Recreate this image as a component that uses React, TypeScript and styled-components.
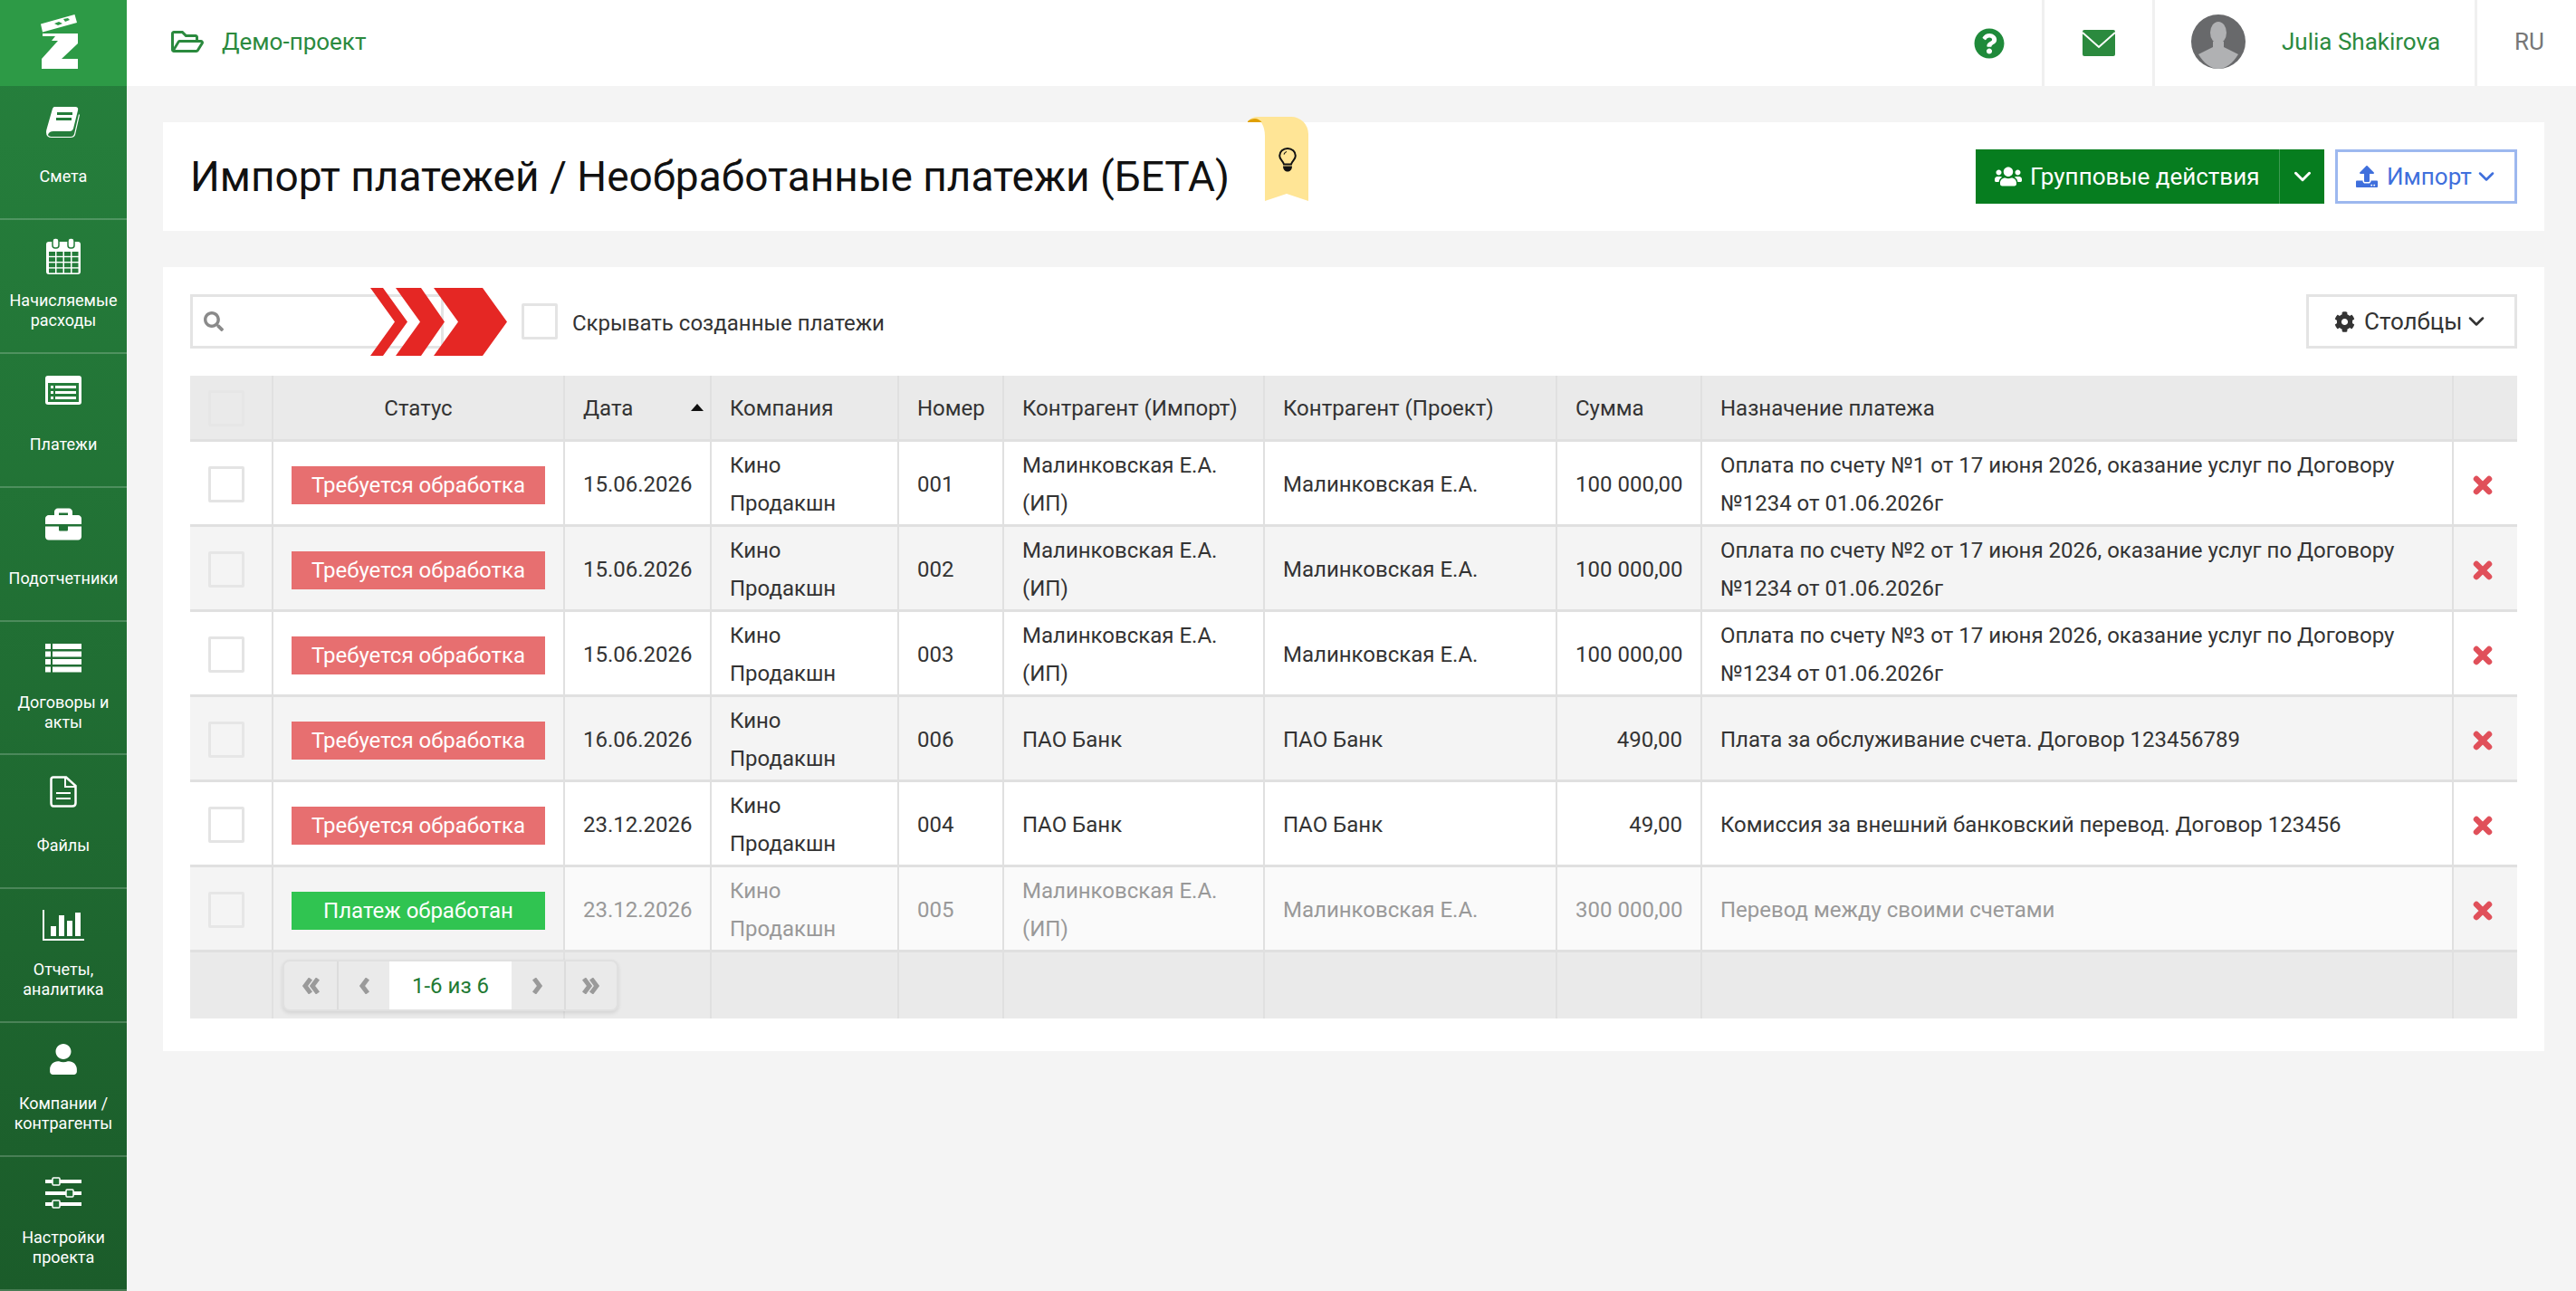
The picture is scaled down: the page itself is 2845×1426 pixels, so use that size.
import styled, { createGlobalStyle } from "styled-components";
import {
  FaBriefcase,
  FaCog,
  FaQuestionCircle,
  FaRegFolderOpen,
  FaSearch,
  FaUpload,
  FaUser,
  FaUsers,
} from "react-icons/fa";
import { ChevronDown } from "lucide-react";

const BookIcon = () => (
  <svg width="38" height="36" viewBox="0 0 38 36">
    <path d="M9 1H32Q36 1 35 5L30 25Q29 28 26 28H8Q3 28 2 32Q3 34 7 34H27Q30 34 31 31L36 9L37 10L32 32Q31 35 27 35H6Q0 35 0 29Q0 27 1 24L7 3Q8 1 9 1Z" fill="#fff" />
    <rect x="12" y="7" width="17" height="3" fill="#247c3a" />
    <rect x="11" y="13" width="17" height="3" fill="#247c3a" />
  </svg>
);

const CalendarIcon = () => {
  const cells = [];
  for (let r = 0; r < 4; r++) {
    for (let c = 0; c < 4; c++) {
      cells.push(<rect key={`${r}-${c}`} x={3 + c * 8.500} y={15 + r * 6.200} width="7" height="4.800" fill="#247c3a" />);
    }
  }
  return (
    <svg width="38" height="40" viewBox="0 0 38 40">
      <rect x="0" y="4" width="38" height="36" rx="3" fill="#fff" />
      {cells}
      <rect x="7" y="0" width="7" height="11" rx="3" fill="#fff" stroke="#247c3a" strokeWidth="1.500" />
      <rect x="24" y="0" width="7" height="11" rx="3" fill="#fff" stroke="#247c3a" strokeWidth="1.500" />
    </svg>
  );
};

const ListAltIcon = () => (
  <svg width="40" height="32" viewBox="0 0 40 32">
    <rect width="40" height="32" rx="3" fill="#fff" />
    <rect x="3" y="8" width="34" height="21" fill="#247c3a" />
    {[11, 17, 23].map((y) => (
      <g key={y} fill="#fff">
        <rect x="6" y={y} width="3" height="3" />
        <rect x="11" y={y} width="23" height="3" />
      </g>
    ))}
  </svg>
);

const ThListIcon = () => (
  <svg width="40" height="32" viewBox="0 0 40 32" fill="#fff">
    {[0, 8.500, 17, 25.500].map((y) => (
      <g key={y}>
        <rect x="0" y={y} width="6" height="6" />
        <rect x="8" y={y} width="32" height="6" />
      </g>
    ))}
  </svg>
);

const FileIcon = () => (
  <svg width="30" height="35" viewBox="0 0 30 35" fill="none" stroke="#fff" strokeWidth="2.500">
    <path d="M4 1.500H18L28.500 11V30Q28.500 33.500 25 33.500H4Q1.500 33.500 1.500 30V4Q1.500 1.500 4 1.500Z" />
    <path d="M17 2V12H28" strokeWidth="2" />
    <path d="M7 19H23M7 25H23" strokeWidth="2" />
  </svg>
);

const BarChartIcon = () => (
  <svg width="46" height="34" viewBox="0 0 46 34" fill="#fff">
    <rect x="0" y="0" width="2" height="34" />
    <rect x="0" y="32" width="46" height="2" />
    <rect x="9" y="18" width="6" height="11" />
    <rect x="18" y="6" width="6" height="23" />
    <rect x="27" y="12" width="6" height="17" />
    <rect x="36" y="3" width="6" height="26" />
  </svg>
);

const SlidersIcon = () => (
  <svg width="40" height="36" viewBox="0 0 40 36">
    {[
      [5, 8],
      [18, 23],
      [30, 8],
    ].map(([y, x]) => (
      <g key={y}>
        <rect x="0" y={y - 2} width="40" height="4" fill="#fff" />
        <rect x={x} y={y - 4} width="8" height="8" rx="1" fill="#1f6e34" stroke="#fff" strokeWidth="1.500" />
      </g>
    ))}
  </svg>
);

const MailIcon = () => (
  <svg width="36" height="29" viewBox="0 0 36 29">
    <rect width="36" height="29" rx="2" fill="#2b8a3e" />
    <path d="M0 3L18 19L36 3" fill="none" stroke="#fff" strokeWidth="2" />
  </svg>
);

const RibbonShape = () => (
  <svg width="68" height="94" viewBox="0 0 68 94">
    <path d="M0 5C5 0 8 0 12 0H48A19 19 0 0 1 67 19V93L43 85L19 93V21C19 10 14 2 8 2C5 2 2 3 0 5Z" fill="#ffe596" />
    <path d="M0 5C2 3 5 2 8 2C11 2 14 4 15.500 6H0Z" fill="#e0a000" />
    <g transform="translate(34 34.500)" fill="none" stroke="#111">
      <path d="M6 18C5 14 1.200 13 1.200 8.500A8.800 8 0 0 1 18.800 8.500C18.800 13 15 14 14 18Z" strokeWidth="2" />
      <path d="M6 7Q7 4.500 9 4" strokeWidth="1.200" />
      <path d="M5 20H15C15 24 12.500 26 10 26C7.500 26 5 24 5 20Z" fill="#111" stroke="none" />
    </g>
  </svg>
);

const Logo = () => (
  <svg width="44" height="60" viewBox="0 0 44 60">
    <path d="M0 10.500L37.500 0L40 9L2 19.500Z" fill="#fff" />
    <path d="M15 10L20 8L24 10L19 12Z M25 5L30 4L32 6L27 8Z" fill="#2d9a46" />
    <path d="M2 21H41V32L23 49H41V60H1V49L19 29H12L16 24H2Z" fill="#fff" />
  </svg>
);

const Avatar = () => (
  <svg width="60" height="60" viewBox="0 0 60 60">
    <circle cx="30" cy="30" r="30" fill="#68696b" />
    <ellipse cx="30" cy="20" rx="9" ry="12" fill="#b0b1b3" />
    <path d="M24 30V36L8 44C14 54 22 60 30 60C38 60 46 54 52 44L36 36V30Z" fill="#b0b1b3" />
  </svg>
);

const Chevrons = () => (
  <svg width="152" height="75" viewBox="0 0 152 75" fill="#e52724">
    <polygon points="0,0 14,0 41,37.500 14,75 0,75 27,37.500" />
    <polygon points="28,0 56,0 82,37.500 56,75 28,75 55,37.500" />
    <polygon points="70,0 124,0 151,37.500 124,75 70,75 97,37.500" />
  </svg>
);

const DeleteIcon = () => (
  <svg width="22" height="22" viewBox="0 0 22 22">
    <path d="M4 4L18 18M18 4L4 18" stroke="#e0505a" strokeWidth="6.500" strokeLinecap="round" />
  </svg>
);

// one or two thick angle marks, mirrored for the forward buttons
const PagerAngle = ({ double, forward }: { double?: boolean; forward?: boolean }) => (
  <svg width="20" height="18" viewBox="0 0 20 18" fill="none" stroke="#9a9a9a" strokeWidth="5">
    <g transform={forward ? "translate(20 0) scale(-1 1)" : undefined}>
      {double ? (
        <>
          <path d="M10 1L4 9L10 17" />
          <path d="M18 1L12 9L18 17" />
        </>
      ) : (
        <path d="M14 1L8 9L14 17" />
      )}
    </g>
  </svg>
);

const navItems = [
  { icon: <BookIcon />, label: "Смета" },
  { icon: <CalendarIcon />, label: "Начисляемые расходы" },
  { icon: <ListAltIcon />, label: "Платежи" },
  { icon: <FaBriefcase size={40} />, label: "Подотчетники" },
  { icon: <ThListIcon />, label: "Договоры и акты" },
  { icon: <FileIcon />, label: "Файлы" },
  { icon: <BarChartIcon />, label: "Отчеты, аналитика" },
  { icon: <FaUser size={34} />, label: "Компании / контрагенты" },
  { icon: <SlidersIcon />, label: "Настройки проекта" },
];

const columns = [90, 322, 162, 207, 116, 288, 323, 160, 830, 72];

const purposeTail = " от 17 июня 2026, оказание услуг по Договору №1234 от 01.06.2026г";

const rows = [
  { date: "15.06.2026", num: "001", importName: "Малинковская Е.А. (ИП)", project: "Малинковская Е.А.", sum: "100 000,00", purpose: "Оплата по счету №1" + purposeTail },
  { date: "15.06.2026", num: "002", importName: "Малинковская Е.А. (ИП)", project: "Малинковская Е.А.", sum: "100 000,00", purpose: "Оплата по счету №2" + purposeTail },
  { date: "15.06.2026", num: "003", importName: "Малинковская Е.А. (ИП)", project: "Малинковская Е.А.", sum: "100 000,00", purpose: "Оплата по счету №3" + purposeTail },
  { date: "16.06.2026", num: "006", importName: "ПАО Банк", project: "ПАО Банк", sum: "490,00", purpose: "Плата за обслуживание счета. Договор 123456789" },
  { date: "23.12.2026", num: "004", importName: "ПАО Банк", project: "ПАО Банк", sum: "49,00", purpose: "Комиссия за внешний банковский перевод. Договор 123456" },
  { date: "23.12.2026", num: "005", importName: "Малинковская Е.А. (ИП)", project: "Малинковская Е.А.", sum: "300 000,00", purpose: "Перевод между своими счетами", done: true },
];

export default function App() {
  return (
    <Page>
      <GlobalStyle />
      <Sidebar>
        <LogoBox>
          <Logo />
        </LogoBox>
        <Nav>
          {navItems.map((item) => (
            <NavItem key={item.label}>
              <NavIcon>{item.icon}</NavIcon>
              <NavLabel>{item.label}</NavLabel>
            </NavItem>
          ))}
        </Nav>
      </Sidebar>

      <Main>
        <Header>
          <Project>
            <FaRegFolderOpen size={36} />
            <span>Демо-проект</span>
          </Project>
          <HeaderCell $width={120}>
            <FaQuestionCircle size={34} color="#1f8a3a" />
          </HeaderCell>
          <HeaderCell $width={122}>
            <MailIcon />
          </HeaderCell>
          <UserCell>
            <Avatar />
            <UserName>Julia Shakirova</UserName>
          </UserCell>
          <LangCell>RU</LangCell>
        </Header>

        <Content>
          <TitleCard>
            <Title>Импорт платежей / Необработанные платежи (БЕТА)</Title>
            <Ribbon>
              <RibbonShape />
            </Ribbon>
            <Actions>
              <GroupButton>
                <GroupMain>
                  <FaUsers size={30} />
                  Групповые действия
                </GroupMain>
                <GroupCaret>
                  <ChevronDown size={30} strokeWidth={2.400} />
                </GroupCaret>
              </GroupButton>
              <ImportButton>
                <FaUpload size={24} />
                Импорт
                <ChevronDown size={28} strokeWidth={2.200} />
              </ImportButton>
            </Actions>
          </TitleCard>

          <TableCard>
            <Toolbar>
              <SearchWrap>
                <SearchBox>
                  <FaSearch size={22} color="#8a8a8a" />
                </SearchBox>
                <ChevronsOver>
                  <Chevrons />
                </ChevronsOver>
              </SearchWrap>
              <Checkbox />
              <HideLabel>Скрывать созданные платежи</HideLabel>
              <ColumnsButton>
                <FaCog size={23} />
                Столбцы
                <ChevronDown size={28} strokeWidth={2.200} />
              </ColumnsButton>
            </Toolbar>

            <Table>
              <colgroup>
                {columns.map((w, i) => (
                  <Col key={i} $w={w} />
                ))}
              </colgroup>
              <thead>
                <tr>
                  <Th>
                    <Checkbox $muted />
                  </Th>
                  <Th $center>Статус</Th>
                  <Th>
                    <SortBox>
                      Дата
                      <SortArrow />
                    </SortBox>
                  </Th>
                  <Th>Компания</Th>
                  <Th>Номер</Th>
                  <Th>Контрагент (Импорт)</Th>
                  <Th>Контрагент (Проект)</Th>
                  <Th>Сумма</Th>
                  <Th>Назначение платежа</Th>
                  <Th />
                </tr>
              </thead>
              <tbody>
                {rows.map((row, i) => (
                  <Row key={row.num} $odd={i % 2 === 1}>
                    <Td>
                      <Checkbox $muted={i % 2 === 1} />
                    </Td>
                    <Td>
                      <Status $done={row.done}>{row.done ? "Платеж обработан" : "Требуется обработка"}</Status>
                    </Td>
                    <Td $dim={row.done}>{row.date}</Td>
                    <Td $dim={row.done}>Кино Продакшн</Td>
                    <Td $dim={row.done}>{row.num}</Td>
                    <Td $dim={row.done}>{row.importName}</Td>
                    <Td $dim={row.done}>{row.project}</Td>
                    <Td $dim={row.done} $right>
                      {row.sum}
                    </Td>
                    <Td $dim={row.done}>{row.purpose}</Td>
                    <DeleteCell>
                      <DeleteIcon />
                    </DeleteCell>
                  </Row>
                ))}
              </tbody>
              <tfoot>
                <tr>
                  <Foot />
                  <Foot>
                    <Pager>
                      <PagerButton>
                        <PagerAngle double />
                      </PagerButton>
                      <PagerButton>
                        <PagerAngle />
                      </PagerButton>
                      <PagerInfo>1-6 из 6</PagerInfo>
                      <PagerButton>
                        <PagerAngle forward />
                      </PagerButton>
                      <PagerButton>
                        <PagerAngle double forward />
                      </PagerButton>
                    </Pager>
                  </Foot>
                  <Foot />
                  <Foot />
                  <Foot />
                  <Foot />
                  <Foot />
                  <Foot />
                  <Foot />
                  <Foot />
                </tr>
              </tfoot>
            </Table>
          </TableCard>
        </Content>
      </Main>
    </Page>
  );
}

const GlobalStyle = createGlobalStyle`
  * {
    box-sizing: border-box;
  }
  html, body {
    margin: 0;
    padding: 0;
  }
  body {
    font-family: Roboto, "Noto Sans", sans-serif;
    font-size: 24px;
    color: #333;
    background: #f4f4f4;
  }
`;

const Page = styled.div`
  display: flex;
  width: 2845px;
  height: 1426px;
  overflow: hidden;
`;

const Sidebar = styled.aside`
  flex: none;
  display: flex;
  flex-direction: column;
  width: 140px;
  background: linear-gradient(#26813d, #1b5c2a);
`;

const LogoBox = styled.div`
  display: flex;
  flex: none;
  justify-content: center;
  align-items: center;
  height: 95px;
  padding: 0 6px 4px 0;
  background: #2d9a46;
`;

const Nav = styled.nav`
  display: flex;
  flex: 1;
  flex-direction: column;
`;

const NavItem = styled.div`
  display: flex;
  flex: 1;
  flex-direction: column;
  align-items: center;
  padding-top: 20px;
  color: #fff;
  border-bottom: 2px solid rgba(255, 255, 255, 0.2);
`;

const NavIcon = styled.div`
  display: flex;
  justify-content: center;
  align-items: center;
  height: 40px;
`;

const NavLabel = styled.div`
  display: flex;
  align-items: center;
  height: 46px;
  margin-top: 17px;
  padding: 0 6px;
  font-size: 18px;
  line-height: 22px;
  text-align: center;
`;

const Main = styled.div`
  flex: 1;
  min-width: 0;
`;

const Header = styled.header`
  display: flex;
  align-items: stretch;
  height: 95px;
  background: #fff;
`;

const Project = styled.div`
  display: flex;
  flex: 1;
  align-items: center;
  gap: 20px;
  padding: 0 0 4px 49px;
  color: #2b8a3e;
  font-size: 26px;
`;

const HeaderCell = styled.div<{ $width: number }>`
  display: flex;
  justify-content: center;
  align-items: center;
  width: ${(p) => p.$width}px;
  border-right: 3px solid #f0f0f0;
`;

const UserCell = styled.div`
  display: flex;
  align-items: center;
  gap: 40px;
  width: 356px;
  padding: 0 0 4px 40px;
  border-right: 3px solid #f0f0f0;
`;

const UserName = styled.span`
  color: #2b8a3e;
  font-size: 26px;
`;

const LangCell = styled.div`
  display: flex;
  align-items: center;
  width: 109px;
  padding: 0 0 4px 41px;
  color: #777;
  font-size: 26px;
`;

const Content = styled.main`
  display: flex;
  flex-direction: column;
  gap: 40px;
  width: 2630px;
  margin: 40px 0 0 40px;
`;

const TitleCard = styled.section`
  position: relative;
  display: flex;
  align-items: center;
  justify-content: space-between;
  height: 120px;
  padding: 0 30px;
  background: #fff;
`;

const Title = styled.h1`
  margin: 0;
  color: #111;
  font-size: 46px;
  font-weight: 400;
`;

const Ribbon = styled.div`
  position: absolute;
  top: -6px;
  left: 1198px;
  line-height: 0;
`;

const Actions = styled.div`
  display: flex;
  gap: 12px;
`;

const GroupButton = styled.div`
  display: flex;
  height: 60px;
  color: #fff;
  background: #067d1f;
`;

const GroupMain = styled.div`
  display: flex;
  align-items: center;
  gap: 9px;
  width: 336px;
  padding-left: 21px;
  font-size: 26px;
  border-right: 1px solid #3d9a52;
`;

const GroupCaret = styled.div`
  display: flex;
  justify-content: center;
  align-items: center;
  width: 49px;
`;

const ImportButton = styled.div`
  display: flex;
  align-items: center;
  gap: 10px;
  width: 201px;
  height: 60px;
  padding-left: 20px;
  color: #3f6fdc;
  font-size: 26px;
  border: 3px solid #9db8ef;

  & > svg:last-child {
    margin: 0 -8px;
  }
`;

const TableCard = styled.section`
  padding: 30px 30px 36px;
  background: #fff;
`;

const Toolbar = styled.div`
  display: flex;
  align-items: center;
  height: 60px;
  margin-bottom: 30px;
`;

const SearchWrap = styled.div`
  position: relative;
  width: 366px;
`;

const SearchBox = styled.div`
  display: flex;
  align-items: center;
  width: 280px;
  height: 60px;
  padding-left: 12px;
  border: 3px solid #e4e4e4;
`;

const ChevronsOver = styled.div`
  position: absolute;
  top: -7px;
  left: 199px;
  line-height: 0;
`;

const Checkbox = styled.div<{ $muted?: boolean }>`
  flex: none;
  width: 40px;
  height: 40px;
  border: 3px solid ${(p) => (p.$muted ? "#e6e6e6" : "#e4e4e4")};
  border-radius: 2px;
`;

const HideLabel = styled.span`
  flex: 1;
  margin-left: 16px;
  padding-top: 3px;
`;

const ColumnsButton = styled.div`
  display: flex;
  align-items: center;
  gap: 10px;
  width: 233px;
  height: 60px;
  padding-left: 28px;
  font-size: 26px;
  border: 3px solid #e4e4e4;

  & > svg:last-child {
    margin: 0 -8px;
  }
`;

const Table = styled.table`
  width: 2570px;
  table-layout: fixed;
  border-collapse: separate;
  border-spacing: 0;
`;

const Col = styled.col<{ $w: number }>`
  width: ${(p) => p.$w}px;
`;

const Th = styled.th<{ $center?: boolean }>`
  height: 73px;
  padding: 1px 20px 0;
  font-weight: 400;
  text-align: ${(p) => (p.$center ? "center" : "left")};
  background: #eaeaea;
  border-bottom: 3px solid #e0e0e0;

  & + & {
    border-left: 2px solid #e0e0e0;
  }
`;

const SortBox = styled.div`
  position: relative;
`;

const SortArrow = styled.span`
  position: absolute;
  top: 9px;
  right: -13px;
  border-right: 7px solid transparent;
  border-bottom: 8px solid #111;
  border-left: 7px solid transparent;
`;

const Row = styled.tr<{ $odd: boolean }>`
  background: ${(p) => (p.$odd ? "#f4f4f4" : "#fff")};
`;

const Td = styled.td<{ $right?: boolean; $dim?: boolean }>`
  height: 94px;
  padding: 2px 20px 0;
  line-height: 42px;
  text-align: ${(p) => (p.$right ? "right" : "left")};
  white-space: ${(p) => (p.$right ? "nowrap" : "normal")};
  color: ${(p) => (p.$dim ? "#999" : "#333")};
  background: ${(p) => (p.$dim ? "#fafafa" : "transparent")};
  border-bottom: 3px solid #e0e0e0;

  & + & {
    border-left: 2px solid #e0e0e0;
  }
`;

const DeleteCell = styled(Td)`
  padding: 4px 6px 0 0;
  text-align: center;
  line-height: 0;
`;

const Status = styled.div<{ $done?: boolean }>`
  height: 42px;
  margin-top: 2px;
  color: #fff;
  line-height: 42px;
  text-align: center;
  background: ${(p) => (p.$done ? "#30c451" : "#e76f70")};
`;

const Foot = styled.td`
  position: relative;
  height: 73px;
  padding: 0;
  background: #eaeaea;

  & + & {
    border-left: 2px solid #e0e0e0;
  }
`;

const Pager = styled.div`
  position: absolute;
  top: 8px;
  left: 10px;
  z-index: 1;
  display: flex;
  width: 371px;
  height: 57px;
  background: #eaeaea;
  border-radius: 8px;
  border: 2px solid #e0e0e0;
  box-shadow: 0 2px 4px rgba(0, 0, 0, 0.1);
  overflow: hidden;
`;

const PagerButton = styled.div`
  display: flex;
  justify-content: center;
  align-items: center;
  width: 58px;

  & + & {
    border-left: 2px solid #dcdcdc;
  }
`;

const PagerInfo = styled.div`
  display: flex;
  justify-content: center;
  align-items: center;
  flex: 1;
  color: #1f7a34;
  background: #fff;
`;
